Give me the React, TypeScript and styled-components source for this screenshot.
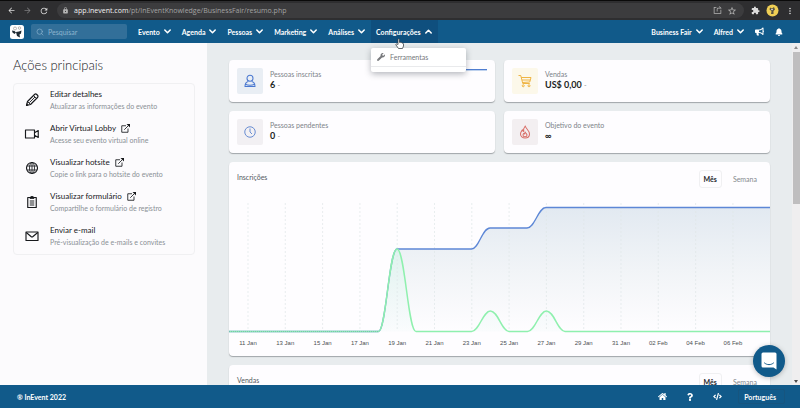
import React from "react";
import styled, { createGlobalStyle, css } from "styled-components";
import {
  MdArrowBack,
  MdArrowForward,
  MdExtension,
  MdLock,
  MdMoreVert,
  MdRefresh,
  MdStarBorder,
} from "react-icons/md";
import { RiShareForwardBoxLine } from "react-icons/ri";
import { FaBell, FaBullhorn, FaCode, FaHome, FaQuestion, FaWrench } from "react-icons/fa";
import { FiSearch } from "react-icons/fi";

const blue = "#115a8a";

const GlobalStyle = createGlobalStyle`
  * { box-sizing: border-box; }
  body { margin: 0; font-family: Lato, "Liberation Sans", sans-serif; font-size: 7px; line-height: 10px; color: #212b36; }
  button, input { font: inherit; color: inherit; border: 0; background: none; padding: 0; margin: 0; }
  h1, h2, p, ul, dl, dd { margin: 0; padding: 0; font-weight: inherit; font-size: inherit; }
  ul { list-style: none; }
  a { color: inherit; text-decoration: none; }
  svg { display: block; flex: none; }
`;

const Page = styled.div`
  height: 100vh;
  display: flex;
  flex-direction: column;
  overflow: hidden;
`;

/* Browser toolbar */
const BrowserBar = styled.header`
  flex: none;
  height: 20px;
  display: flex;
  align-items: center;
  padding: 0 5px 0 7px;
  background: #2e2e30;
  border-top: 1px solid #0a0a0a;
  color: #dcdcdc;
`;

const BrowserNav = styled.div`
  flex: none;
  width: 50px;
  display: flex;
  gap: 7px;
`;

const BrowserButton = styled.button<{ $dim?: boolean }>`
  color: ${(p) => (p.$dim ? "#7d7d7f" : "inherit")};
`;

const AddressBar = styled.div`
  flex: 1;
  height: 15px;
  display: flex;
  align-items: center;
  gap: 5px;
  padding: 0 7px 0 5px;
  border-radius: 8px;
  background: #3c3c3e;
  color: #b5b5b5;
`;

const Address = styled.p`
  flex: 1;
  font: 7px/10px "Open Sans", sans-serif;
  color: #a3a3a3;
  strong {
    font-weight: 400;
    color: #f2f2f2;
  }
`;

const BrowserTools = styled.div`
  flex: none;
  display: flex;
  align-items: center;
  gap: 6px;
  padding-left: 7px;
`;

/* Application navigation */
const NavBar = styled.nav`
  flex: none;
  height: 23px;
  display: flex;
  align-items: stretch;
  padding: 0 11px 0 10px;
  background: ${blue};
  color: #fff;
`;

const Brand = styled.a`
  align-self: center;
  margin-right: 7px;
`;

const Search = styled.label`
  align-self: center;
  width: 96px;
  height: 15px;
  display: flex;
  align-items: center;
  gap: 4px;
  padding: 0 5px;
  margin-right: 6px;
  border-radius: 2px;
  background: #326f99;
  color: #8db4ce;
`;

const SearchInput = styled.input`
  flex: 1;
  min-width: 0;
  outline: 0;
  &::placeholder {
    color: #8db4ce;
    opacity: 1;
  }
`;

const NavSlot = styled.div`
  position: relative;
  display: flex;
`;

const NavButton = styled.button<{ $open?: boolean }>`
  display: flex;
  align-items: center;
  gap: 4px;
  padding: 0 6px 0 5px;
  font-weight: 700;
  white-space: nowrap;
  background: ${(p) => (p.$open ? "#0f4f7e" : "transparent")};
`;

const Spacer = styled.div`
  flex: 1;
`;

const Menu = styled.ul`
  position: absolute;
  top: 28px;
  left: 0;
  z-index: 3;
  width: 95px;
  height: 24px;
  background: #fff;
  border-radius: 2px;
  box-shadow: 0 2px 6px rgba(40, 50, 60, 0.35);
  color: #76787b;
`;

const MenuItem = styled.li`
  border-bottom: 1px solid #e9eaec;
  button {
    display: flex;
    align-items: center;
    gap: 5px;
    width: 100%;
    height: 18px;
    padding: 0 6px;
  }
`;

const Pointer = styled.svg`
  position: absolute;
  top: 18px;
  left: 24px;
  z-index: 4;
`;

/* Content area */
const Body = styled.div`
  flex: 1;
  min-height: 0;
  display: flex;
  background: #e8ecee;
`;

const Sidebar = styled.aside`
  flex: none;
  width: 207px;
  padding: 13px 12px 0 13px;
  background: #fcfbfd;
`;

const SidebarTitle = styled.h1`
  font-size: 13px;
  font-weight: 300;
  line-height: 18px;
  margin-bottom: 9px;
  color: #14171b;
`;

const ActionList = styled.ul`
  border: 1px solid #f0f0f2;
  border-radius: 4px;
`;

const Action = styled.li`
  height: 34px;
  display: flex;
  align-items: center;
  gap: 10px;
  padding: 0 0 2px 10px;
  color: #17191c;
`;

const ActionTitle = styled.a`
  display: flex;
  align-items: center;
  gap: 5px;
  font-size: 8px;
  line-height: 11px;
  color: #17191c;
`;

const ActionNote = styled.p`
  line-height: 12px;
  color: #8a9096;
`;

const Main = styled.main`
  flex: 1;
  min-width: 0;
  overflow: hidden;
  padding: 17px 22px 0;
  display: flex;
  flex-direction: column;
  gap: 9px;
`;

const card = css`
  background: #fefdff;
  border-radius: 4px;
  box-shadow: 0 1px 1px rgba(90, 95, 100, 0.5);
`;

const Stats = styled.div`
  display: grid;
  grid-template-columns: 1fr 1fr;
  gap: 9px;
`;

const StatCard = styled.section`
  ${card}
  height: 42px;
  display: flex;
  align-items: center;
  gap: 7px;
  padding: 0 8px;
`;

const StatIcon = styled.span<{ $ink: string; $tint: string }>`
  width: 26px;
  height: 26px;
  display: flex;
  align-items: center;
  justify-content: center;
  border-radius: 2px;
  color: ${(p) => p.$ink};
  background: ${(p) => p.$tint};
`;

const StatText = styled.div`
  padding-bottom: 2px;
`;

const StatLabel = styled.h2`
  color: #7d8389;
`;

const StatValue = styled.p`
  font-size: 9px;
  line-height: 12px;
  font-weight: 700;
  color: #1c1f24;
  small {
    font-size: 7px;
    font-weight: 400;
    color: #8f959b;
  }
`;

const Sparkline = styled.span`
  align-self: flex-start;
  width: 30px;
  height: 2px;
  margin: 9px 0 0 auto;
  border-top: 1px solid #4f7dd0;
  background: #bfd2ee;
`;

const ChartCard = styled.section`
  ${card}
  flex: none;
`;

const ChartHead = styled.div`
  display: flex;
  align-items: center;
  justify-content: space-between;
  height: 30px;
  padding: 3px 8px 0;
`;

const ChartTitle = styled.h2`
  padding-bottom: 4px;
  color: #55595e;
`;

const Tabs = styled.div`
  display: flex;
  gap: 6px;
`;

const Tab = styled.button<{ $active?: boolean }>`
  height: 18px;
  padding: 0 4px;
  border: 1px solid ${(p) => (p.$active ? "#f0f0f2" : "transparent")};
  border-radius: 3px;
  font-weight: ${(p) => (p.$active ? 700 : 400)};
  color: ${(p) => (p.$active ? "#24272c" : "#85898e")};
`;

const Plot = styled.svg`
  width: 100%;
  height: auto;
  font: 6px "Liberation Sans", sans-serif;
  fill: #4c4f52;
`;

const Scrollbar = styled.div`
  flex: none;
  width: 8px;
  display: flex;
  flex-direction: column;
  align-items: center;
  justify-content: space-between;
  padding: 3px 0 2px;
  background: #efeeef;
`;

const Thumb = styled.div`
  width: 7px;
  height: 152px;
  margin: 3px 0 auto;
  background: #bfbebf;
`;

/* Footer */
const Footer = styled.footer`
  position: relative;
  flex: none;
  height: 23px;
  display: flex;
  align-items: center;
  padding: 0 15px 0 17px;
  background: ${blue};
  color: #fff;
  font-weight: 700;
`;

const Copyright = styled.p`
  flex: 1;
`;

const FooterLinks = styled.div`
  display: flex;
  align-items: center;
  gap: 19px;
`;

const Language = styled.button`
  height: 15px;
  margin-left: -3px;
  padding: 0 8px 0 5px;
  border: 1px solid #16557f;
  border-radius: 2px;
  font-weight: 700;
`;

const ChatButton = styled.button`
  position: absolute;
  right: 15px;
  bottom: 31px;
  width: 32px;
  height: 32px;
  display: flex;
  align-items: center;
  justify-content: center;
  border-radius: 50%;
  background: ${blue};
  box-shadow: 0 1px 5px rgba(0, 0, 0, 0.25);
`;

const Chevron = ({ up }: { up?: boolean }) => (
  <svg width="7" height="5" viewBox="0 0 7 5" fill="none" stroke="currentColor" strokeWidth="1.5" strokeLinecap="round" strokeLinejoin="round">
    <path d={up ? "M.8 4 3.5 1.2 6.2 4" : "M.8 1 3.5 3.8 6.2 1"} />
  </svg>
);

const ExternalIcon = () => (
  <svg width="9" height="9" viewBox="0 0 18 18" fill="none" stroke="currentColor" strokeWidth="1.7">
    <path d="M10 3.500H1.500v13H14V9M6.500 11.500 15 3" />
    <path d="M11 0h7v7z" fill="currentColor" stroke="none" />
  </svg>
);

const ActionIcon = ({ children }: { children: React.ReactNode }) => (
  <svg width="16" height="16" viewBox="0 0 32 32" fill="none" stroke="currentColor" strokeWidth="2.3" strokeLinejoin="round">
    {children}
  </svg>
);

const PencilIcon = () => (
  <ActionIcon>
    <path d="M5 27l2-8L21.500 4.500q2-1.500 4 .5l1.500 1.500q2 2 .5 4L13 25z" />
    <path d="M7 19l6 6M19 7l6 6M10.500 21.500 22 10M5 27l3.500-1-2.500-2.500z" strokeWidth="1.800" />
  </ActionIcon>
);

const VideoIcon = () => (
  <ActionIcon>
    <path d="M3 8h18v16H3zM21 13.500 28.500 9v14L21 18.500" />
  </ActionIcon>
);

const GlobeIcon = () => (
  <ActionIcon>
    <circle cx="16" cy="16" r="11" />
    <ellipse cx="16" cy="16" rx="5" ry="11" strokeWidth="1.700" />
    <path d="M6 12h20M6 20h20M16 5v22" strokeWidth="1.700" />
  </ActionIcon>
);

const ClipboardIcon = () => (
  <ActionIcon>
    <path d="M7.500 7h17v20h-17z" />
    <path d="M12 9V6h2q2-4 4 0h2v3z" fill="currentColor" strokeWidth="1.500" />
    <path d="M11.500 14h9M11.500 18h9M11.500 22h9" strokeWidth="1.900" />
  </ActionIcon>
);

const MailIcon = () => (
  <ActionIcon>
    <path d="M4 8h24v17H4z" />
    <path d="M4.500 9 14 17q2 1.500 4 0L27.500 9" />
  </ActionIcon>
);

const UserIcon = () => (
  <svg width="14" height="14" viewBox="0 0 28 28" fill="none" stroke="currentColor" strokeWidth="2.100" strokeLinejoin="round">
    <circle cx="14" cy="8.500" r="6" />
    <path d="M10.500 15C6 16 4 19 4 25h20c0-6-2-9-6.500-10M4.500 20.500c6 2.500 13 2.500 19 0" />
  </svg>
);

const CartIcon = () => (
  <svg width="14" height="14" viewBox="0 0 28 28" fill="none" stroke="currentColor" strokeWidth="1.900" strokeLinejoin="round">
    <path d="M1 3h4.500l4 16h14M6.500 7H26l-2.500 9L9 17M8 12h16.500" />
    <circle cx="10.500" cy="23.500" r="2" />
    <circle cx="22" cy="23.500" r="2" />
  </svg>
);

const ClockIcon = () => (
  <svg width="12" height="12" viewBox="0 0 24 24" fill="none" stroke="currentColor" strokeWidth="1.900">
    <circle cx="12" cy="12" r="10.500" />
    <path d="M12 5v7l4 4" />
  </svg>
);

const FlameIcon = () => (
  <svg width="12" height="14" viewBox="0 0 24 28" fill="none" stroke="currentColor" strokeWidth="2.100" strokeLinejoin="round">
    <path d="M12.500 2c1 5.500 8.500 9 8.500 16 0 5-4 8-9 8s-9-3-9-8c0-4 2.500-6 4-8.500.5 2 1 3 2.500 3.500C8.500 8.500 10 5 12.500 2z" />
    <path d="M12.500 14c.5 2.500 3.500 3 3.500 6 0 2-1.500 3.500-4 3.500S8 22 8 20c0-1.500.5-2.500 1.500-3.500.5 1 1 1.500 2 1.500-.5-1.500 0-3 1-4z" />
  </svg>
);

const NavMenu = ({ label, open, children }: { label: string; open?: boolean; children?: React.ReactNode }) => (
  <NavSlot>
    <NavButton $open={open} aria-expanded={!!open}>
      {label}
      <Chevron up={open} />
    </NavButton>
    {children}
  </NavSlot>
);

const actions = [
  { icon: <PencilIcon />, title: "Editar detalhes", note: "Atualizar as informações do evento" },
  { icon: <VideoIcon />, title: "Abrir Virtual Lobby", note: "Acesse seu evento virtual online", external: true },
  { icon: <GlobeIcon />, title: "Visualizar hotsite", note: "Copie o link para o hotsite do evento", external: true },
  { icon: <ClipboardIcon />, title: "Visualizar formulário", note: "Compartilhe o formulário de registro", external: true },
  { icon: <MailIcon />, title: "Enviar e-mail", note: "Pré-visualização de e-mails e convites" },
];

const stats = [
  { icon: <UserIcon />, ink: "#4a78d0", tint: "#e9eef4", label: "Pessoas inscritas", value: "6", suffix: "-", trend: true },
  { icon: <CartIcon />, ink: "#eeb13c", tint: "#fcf8ea", label: "Vendas", value: "US$ 0,00", suffix: "-" },
  { icon: <ClockIcon />, ink: "#6288d0", tint: "#f2f0f3", label: "Pessoas pendentes", value: "0", suffix: "-" },
  { icon: <FlameIcon />, ink: "#d96f68", tint: "#f3eff1", label: "Objetivo do evento", value: "∞" },
];

const days = ["11 Jan", "13 Jan", "15 Jan", "17 Jan", "19 Jan", "21 Jan", "23 Jan", "25 Jan", "27 Jan", "29 Jan", "31 Jan", "02 Feb", "04 Feb", "06 Feb"];
const firstDay = 19;
const dayStep = 37.3;

const totalLine =
  "M0 139.500H149.500C157 139.500 160 57 168 57H242.500C250 57 253 36 261 36H298C306 36 309 15.500 317 15.500H541";
const dailyLine =
  "M0 139.500H149.500C157 139.500 160 57 168 57S179 139.500 187 139.500H242.500C250 139.500 254 119 261.500 119S273 139.500 280 139.500H298.500C306 139.500 310 119 317.500 119S329 139.500 336 139.500H541";

const InscriptionsPlot = () => (
  <Plot viewBox="0 0 541 164" role="img" aria-label="Inscrições por dia">
    <defs>
      <linearGradient id="totalFill" x1="0" y1="0" x2="0" y2="1">
        <stop offset="0" stopColor="#e2e9f1" />
        <stop offset="0.5" stopColor="#f1f4f7" />
        <stop offset="1" stopColor="#fefdff" />
      </linearGradient>
      <linearGradient id="dailyFill" x1="0" y1="0" x2="0" y2="1">
        <stop offset="0" stopColor="#dff3ee" />
        <stop offset="1" stopColor="#f4fafb" stopOpacity="0.4" />
      </linearGradient>
    </defs>
    <path d={`${totalLine}V139.500H0Z`} fill="url(#totalFill)" />
    <path d={`${dailyLine}Z`} fill="url(#dailyFill)" />
    {days.map((day, i) => (
      <g key={day}>
        <line x1={firstDay + i * dayStep} x2={firstDay + i * dayStep} y1="11" y2="139" stroke="#dfe6e8" strokeWidth="0.700" strokeDasharray="2 2" />
        <text x={firstDay + i * dayStep} y="153" textAnchor="middle">
          {day}
        </text>
      </g>
    ))}
    <path d={totalLine} fill="none" stroke="#5d87d6" strokeWidth="1.300" />
    <path d={dailyLine} fill="none" stroke="#8ff0ae" strokeWidth="1.500" />
    <path d="M0 139.500H149.500" fill="none" stroke="#6fa9b5" strokeWidth="0.700" strokeDasharray="1 1" />
  </Plot>
);

const ChartHeader = ({ title }: { title: string }) => (
  <ChartHead>
    <ChartTitle>{title}</ChartTitle>
    <Tabs>
      <Tab $active>Mês</Tab>
      <Tab>Semana</Tab>
    </Tabs>
  </ChartHead>
);

export default function App() {
  return (
    <Page>
      <GlobalStyle />
      <BrowserBar>
        <BrowserNav>
          <BrowserButton aria-label="Voltar"><MdArrowBack size={9} /></BrowserButton>
          <BrowserButton $dim aria-label="Avançar"><MdArrowForward size={9} /></BrowserButton>
          <BrowserButton aria-label="Recarregar"><MdRefresh size={10} /></BrowserButton>
        </BrowserNav>
        <AddressBar>
          <MdLock size={7} />
          <Address>
            <strong>app.inevent.com</strong>/pt/InEventKnowledge/BusinessFair/resumo.php
          </Address>
          <BrowserButton aria-label="Compartilhar"><RiShareForwardBoxLine size={9} /></BrowserButton>
          <BrowserButton aria-label="Favoritar"><MdStarBorder size={10} /></BrowserButton>
        </AddressBar>
        <BrowserTools>
          <BrowserButton aria-label="Extensões"><MdExtension size={9} /></BrowserButton>
          <BrowserButton aria-label="Perfil">
            <svg width="13" height="13" viewBox="0 0 26 26">
              <circle cx="13" cy="13" r="12" fill="#f0cf55" />
              <path d="M8 7l4 2 4-3 2 5-3 3v6h-5l1-6-4-3z" fill="#5a5440" />
              <circle cx="12" cy="11" r="1.500" fill="#fff" />
            </svg>
          </BrowserButton>
          <BrowserButton aria-label="Mais opções"><MdMoreVert size={10} /></BrowserButton>
        </BrowserTools>
      </BrowserBar>

      <NavBar>
        <Brand href="#" aria-label="InEvent">
          <svg width="14" height="14" viewBox="0 0 28 28">
            <rect width="28" height="28" rx="5" fill="#fff" />
            <circle cx="10" cy="7" r="3" fill="none" stroke="#a9a29c" strokeWidth="1.500" />
            <circle cx="19" cy="6" r="2.500" fill="none" stroke="#a9a29c" strokeWidth="1.500" />
            <path d="M4 11l5 1 3 3-3 3-4-3z" fill="#1e2a33" />
            <path d="M12 14l6-1 5-2-1 6-3 2 1 6-6-3-1-4z" fill="#1e2a33" />
          </svg>
        </Brand>
        <Search>
          <FiSearch size={8} />
          <SearchInput placeholder="Pesquisar" aria-label="Pesquisar" />
        </Search>
        <NavMenu label="Evento" />
        <NavMenu label="Agenda" />
        <NavMenu label="Pessoas" />
        <NavMenu label="Marketing" />
        <NavMenu label="Análises" />
        <NavMenu label="Configurações" open>
          <Menu>
            <MenuItem>
              <button>
                <FaWrench size={8} />
                Ferramentas
              </button>
            </MenuItem>
          </Menu>
          <Pointer width="9" height="11" viewBox="0 0 18 22" fill="#fff" stroke="#33383d" strokeWidth="1.500" strokeLinejoin="round">
            <path d="M6 13V3c0-2 3-2 3 0v6c1-1 2.500-.5 3 .5 1-.8 2.500-.3 2.700.8C16 10 17 11 17 12v4l-2 5H7l-5-7c-1-2 1-3 2.500-1.500z" />
          </Pointer>
        </NavMenu>
        <Spacer />
        <NavMenu label="Business Fair" />
        <NavMenu label="Alfred" />
        <NavButton aria-label="Novidades"><FaBullhorn size={9} /></NavButton>
        <NavButton aria-label="Notificações"><FaBell size={8} /></NavButton>
      </NavBar>

      <Body>
        <Sidebar>
          <SidebarTitle>Ações principais</SidebarTitle>
          <ActionList>
            {actions.map((a) => (
              <Action key={a.title}>
                {a.icon}
                <div>
                  <ActionTitle href="#">
                    {a.title}
                    {a.external && <ExternalIcon />}
                  </ActionTitle>
                  <ActionNote>{a.note}</ActionNote>
                </div>
              </Action>
            ))}
          </ActionList>
        </Sidebar>

        <Main>
          <Stats>
            {stats.map((s) => (
              <StatCard key={s.label}>
                <StatIcon $ink={s.ink} $tint={s.tint}>{s.icon}</StatIcon>
                <StatText>
                  <StatLabel>{s.label}</StatLabel>
                  <StatValue>
                    {s.value} {s.suffix && <small>{s.suffix}</small>}
                  </StatValue>
                </StatText>
                {s.trend && <Sparkline />}
              </StatCard>
            ))}
          </Stats>
          <ChartCard>
            <ChartHeader title="Inscrições" />
            <InscriptionsPlot />
          </ChartCard>
          <ChartCard>
            <ChartHeader title="Vendas" />
          </ChartCard>
        </Main>

        <Scrollbar>
          <svg width="4" height="3" viewBox="0 0 4 3" fill="#8a8a8a"><path d="M0 3 2 0l2 3z" /></svg>
          <Thumb />
          <svg width="4" height="3" viewBox="0 0 4 3" fill="#4a4a4a"><path d="M0 0h4L2 3z" /></svg>
        </Scrollbar>
      </Body>

      <Footer>
        <Copyright>® InEvent 2022</Copyright>
        <FooterLinks>
          <a href="#" aria-label="Início"><FaHome size={9} /></a>
          <a href="#" aria-label="Ajuda"><FaQuestion size={8} /></a>
          <a href="#" aria-label="Desenvolvedores"><FaCode size={9} /></a>
          <Language>Português</Language>
        </FooterLinks>
        <ChatButton aria-label="Abrir chat">
          <svg width="16" height="18" viewBox="0 0 32 36">
            <path d="M4 1h24q3 0 3 3v31l-6-4H4q-3 0-3-3V4q0-3 3-3z" fill="#fff" />
            <path d="M7 22c5 4.500 13 4.500 18 0" fill="none" stroke={blue} strokeWidth="2" strokeLinecap="round" />
          </svg>
        </ChatButton>
      </Footer>
    </Page>
  );
}
